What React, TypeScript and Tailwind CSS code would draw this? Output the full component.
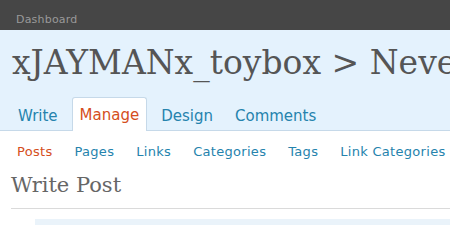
import React from "react";

const tabs = ["Write", "Manage", "Design", "Comments"];
const subnav = ["Posts", "Pages", "Links", "Categories", "Tags", "Link Categories"];

export default function App() {
  return (
    <div className="w-[450px] h-[225px] overflow-hidden bg-white font-['DejaVu_Sans',sans-serif]">
      {/* top bar */}
      <div className="h-[30px] bg-[#464646] pl-4 pt-[13px]">
        <span className="block text-[11px] leading-[14px] tracking-[0.2px] text-[#999999]">Dashboard</span>
      </div>

      {/* blog header + tabs */}
      <div className="bg-[#e4f2fd] border-b border-[#c6d9e9]">
        <h1 className="pl-3 pt-4 text-[33px] leading-[33px] text-[#555555] whitespace-nowrap font-['DejaVu_Serif',serif]">
          xJAYMANx_toybox &gt; Never
        </h1>
        <ul className="flex gap-[6px] ml-[10px] mt-[18px]">
          {tabs.map((t) => (
            <li
              key={t}
              className={
                t === "Manage"
                  ? "-mb-px px-[7px] pt-[7px] pb-[4px] text-[15px] leading-[20px] bg-white text-[#d54e21] border border-b-0 border-[#c6d9e9] rounded-t-[3px]"
                  : "px-[7px] pt-[8px] pb-[3px] text-[15px] leading-[20px] text-[#2583ad] border border-transparent"
              }
            >
              {t}
            </li>
          ))}
        </ul>
      </div>

      {/* sub navigation */}
      <ul className="flex gap-[22px] pl-[17px] pt-[12px] text-[13px] leading-[18px] tracking-[0.3px] whitespace-nowrap">
        {subnav.map((s) => (
          <li key={s} className={s === "Posts" ? "text-[#d54e21]" : "text-[#2583ad]"}>
            {s}
          </li>
        ))}
      </ul>

      <h2 className="ml-[11px] mt-[12px] pb-[11px] border-b border-[#dadada] text-[21px] leading-[24px] text-[#666666] font-['DejaVu_Serif',serif]">
        Write Post
      </h2>

      <div className="ml-[35px] mt-[10px] h-[40px] bg-[#eaf3fa]" />
    </div>
  );
}
